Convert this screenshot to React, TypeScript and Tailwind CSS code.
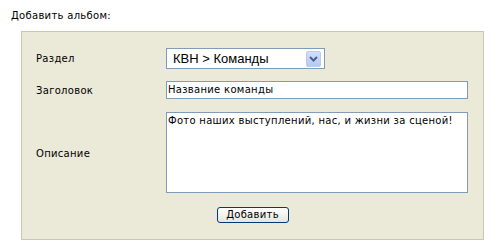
import React from 'react';

const font = { fontFamily: '"DejaVu Sans", Verdana, sans-serif' };

function FakeSelect({ value }: { value: string }) {
  return (
    <div className="flex items-center w-[159px] h-[21px] border border-[#7f9db9] bg-white p-px">
      <span
        className="flex-1 pl-[5px] text-[13px] leading-none tracking-normal text-black"
        style={{ fontFamily: '"Liberation Sans", Arial, sans-serif' }}
      >
        {value}
      </span>
      <span className="mr-[2px] flex h-[16px] w-[15px] items-center justify-center rounded-[2px] border border-[#b9cbf3] bg-gradient-to-b from-[#d2dffc] to-[#b4c9f7]">
        <svg width="9" height="6" viewBox="0 0 9 6">
          <path d="M1 1 L4.5 4.5 L8 1" fill="none" stroke="#4d6185" strokeWidth="2" />
        </svg>
      </span>
    </div>
  );
}

export default function App() {
  return (
    <div className="bg-white w-[501px] h-[250px] text-[10px] tracking-[0.3px] text-black" style={font}>
      <div className="h-[31px] pl-[11px] pt-[9px] leading-[13px]">Добавить альбом:</div>
      <div className="ml-[21px] w-[463px] h-[209px] border border-[#cac7b5] bg-[#ebe9d8] pl-[14px] pt-[16px]">
        <div className="flex items-center h-[21px]">
          <div className="w-[130px]">Раздел</div>
          <FakeSelect value="КВН > Команды" />
        </div>
        <div className="flex items-center h-[18px] mt-[12px]">
          <div className="w-[130px]">Заголовок</div>
          <div className="flex items-center w-[302px] h-[18px] border border-[#7f9db9] bg-white pl-px leading-none">
            Название команды
          </div>
        </div>
        <div className="flex items-center h-[81px] mt-[13px]">
          <div className="w-[130px] pt-[2px]">Описание</div>
          <div className="w-[302px] h-[81px] border border-[#7f9db9] bg-white pl-px pt-[2px] leading-[12px]">
            Фото наших выступлений, нас, и жизни за сценой!
          </div>
        </div>
        <div className="flex justify-center mt-[14px] pr-[14px]">
          <button className="w-[72px] h-[16px] rounded-[3px] border border-[#003c74] bg-gradient-to-b from-white to-[#e6e5de] text-[10px] leading-none tracking-[0.3px] text-black">
            Добавить
          </button>
        </div>
      </div>
    </div>
  );
}
